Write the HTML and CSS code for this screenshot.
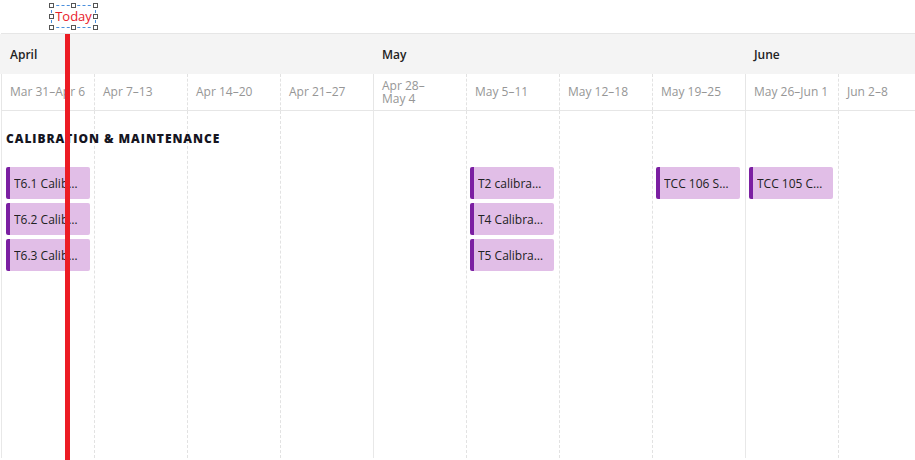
FILE: index.html
```html
<!DOCTYPE html>
<html>
<head>
<meta charset="utf-8">
<link rel="stylesheet" href="styles.css">
</head>
<body>
<div class="page">
  <div class="top"></div>
  <div class="timeline">
    <div class="months">
      <div class="month m-apr">April</div>
      <div class="month m-may">May</div>
      <div class="month m-jun">June</div>
    </div>
    <div class="weeks">
      <div class="week solid">Mar 31–Apr 6</div>
      <div class="week">Apr 7–13</div>
      <div class="week">Apr 14–20</div>
      <div class="week">Apr 21–27</div>
      <div class="week solid two-line"><span>Apr 28–</span><span>May 4</span></div>
      <div class="week">May 5–11</div>
      <div class="week">May 12–18</div>
      <div class="week">May 19–25</div>
      <div class="week solid">May 26–Jun 1</div>
      <div class="week">Jun 2–8</div>
    </div>
    <div class="body">
      <div class="col solid c1"></div>
      <div class="col c2"></div>
      <div class="col c3"></div>
      <div class="col c4"></div>
      <div class="col solid c5"></div>
      <div class="col c6"></div>
      <div class="col c7"></div>
      <div class="col c8"></div>
      <div class="col solid c9"></div>
      <div class="col c10"></div>

      <div class="section">Calibration &amp; Maintenance</div>

      <div class="bar first c1 r2"><span>T6.1 Calibration</span></div>
      <div class="bar first c1 r3"><span>T6.2 Calibration</span></div>
      <div class="bar first c1 r4"><span>T6.3 Calibration</span></div>

      <div class="bar c6 r2"><span>T2 calibration</span></div>
      <div class="bar c6 r3"><span>T4 Calibration</span></div>
      <div class="bar c6 r4"><span>T5 Calibration</span></div>

      <div class="bar c8 r2"><span>TCC 106 Service</span></div>
      <div class="bar c9 r2"><span>TCC 105 Calibration</span></div>
    </div>
  </div>

  <div class="today-label">
    <span class="today-text">Today</span>
    <i class="h h-tl"></i><i class="h h-tm"></i><i class="h h-tr"></i>
    <i class="h h-ml"></i><i class="h h-mr"></i>
    <i class="h h-bl"></i><i class="h h-bm"></i><i class="h h-br"></i>
  </div>
  <div class="today-line"></div>
</div>
</body>
</html>
```

FILE: styles.css
```css
html, body {
  margin: 0;
  padding: 0;
  background: #ffffff;
}
body {
  font-family: "Open Sans", "Liberation Sans", sans-serif;
  width: 915px;
  height: 460px;
  overflow: hidden;
}
.page {
  position: relative;
  width: 915px;
  height: 460px;
  overflow: hidden;
}
.top {
  height: 33px;
}
.timeline {
  width: 930px;
  margin-left: 1px;
  border-top: 1px solid #e6e6e6;
}
.months {
  display: grid;
  grid-template-columns: repeat(10, 93px);
  height: 40px;
  background: #f4f4f4;
  margin-left: -1px;
  padding-left: 1px;
}
.month {
  display: flex;
  align-items: center;
  padding-left: 9px;
  font-size: 12px;
  font-weight: 600;
  color: #222222;
}
.m-apr { grid-column: 1 / span 4; }
.m-may { grid-column: 5 / span 4; }
.m-jun { grid-column: 9 / span 2; }

.weeks {
  display: grid;
  grid-template-columns: repeat(10, 93px);
  height: 36px;
  border-bottom: 1px solid #e6e6e6;
}
.week {
  display: flex;
  align-items: center;
  padding-left: 8px;
  font-size: 12px;
  line-height: 14px;
  color: #969696;
  border-left: 1px dashed #e2e2e2;
  white-space: nowrap;
}
.week.two-line {
  flex-direction: column;
  align-items: flex-start;
  justify-content: center;
  line-height: 13px;
}
.week.solid {
  border-left: 1px solid #e6e6e6;
}

.body {
  display: grid;
  grid-template-columns: repeat(10, 93px);
  grid-template-rows: auto 32px 32px 32px 1fr;
  row-gap: 4px;
  height: 347px;
}
.col {
  grid-row: 1 / -1;
  border-left: 1px dashed #e2e2e2;
}
.col.solid {
  border-left: 1px solid #e8e8e8;
}
.c1 { grid-column: 1; }
.c2 { grid-column: 2; }
.c3 { grid-column: 3; }
.c4 { grid-column: 4; }
.c5 { grid-column: 5; }
.c6 { grid-column: 6; }
.c7 { grid-column: 7; }
.c8 { grid-column: 8; }
.c9 { grid-column: 9; }
.c10 { grid-column: 10; }
.r2 { grid-row: 2; }
.r3 { grid-row: 3; }
.r4 { grid-row: 4; }

.section {
  grid-column: 1 / -1;
  grid-row: 1;
  margin: 20px 0 16px 5px;
  font-size: 12px;
  line-height: 16px;
  font-weight: 800;
  letter-spacing: 0.95px;
  text-transform: uppercase;
  color: #15151f;
  position: relative;
}
.bar {
  margin-left: 4px;
  width: 84px;
  box-sizing: border-box;
  background: #e1bee7;
  border-left: 4px solid #7b1fa2;
  border-radius: 2px;
  display: flex;
  align-items: center;
  padding: 0 9px 0 4px;
  font-size: 12px;
  color: #222222;
  position: relative;
  overflow: hidden;
}
.bar.first {
  margin-left: 5px;
}
.bar span {
  white-space: nowrap;
  overflow: hidden;
  text-overflow: ellipsis;
}

.today-line {
  position: absolute;
  left: 65px;
  top: 34px;
  width: 5px;
  height: 426px;
  background: #ec1c24;
}
.today-label {
  position: absolute;
  left: 51px;
  top: 5px;
  width: 43px;
  height: 21px;
  border: 1px dashed #4a8fdc;
  display: flex;
  align-items: center;
  justify-content: center;
}
.today-text {
  font-size: 13px;
  color: #e8202a;
  line-height: 15px;
}
.h {
  position: absolute;
  width: 3px;
  height: 3px;
  border: 1px solid #555555;
  background: #ffffff;
}
.h-tl { left: -3px; top: -3px; }
.h-tm { left: 19px; top: -3px; }
.h-tr { right: -3px; top: -3px; }
.h-ml { left: -3px; top: 8px; }
.h-mr { right: -3px; top: 8px; }
.h-bl { left: -3px; bottom: -3px; }
.h-bm { left: 19px; bottom: -3px; }
.h-br { right: -3px; bottom: -3px; }
```
